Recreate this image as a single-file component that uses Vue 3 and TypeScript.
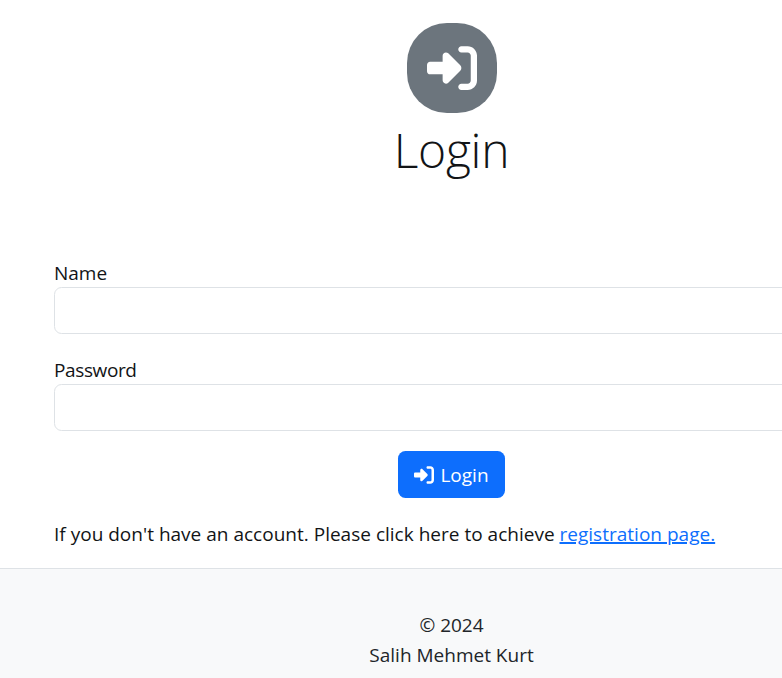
<script setup lang="ts">
import { ref } from 'vue'

const name = ref('')
const password = ref('')
const arrowPath =
  'M217.9 105.9L340.7 228.7c7.2 7.2 11.3 17.1 11.3 27.3s-4.1 20.1-11.3 27.3L217.9 406.1c-6.4 6.4-15 9.9-24 9.9c-18.7 0-33.9-15.2-33.9-33.9l0-62.1L32 320c-17.7 0-32-14.3-32-32l0-64c0-17.7 14.3-32 32-32l128 0 0-62.1c0-18.7 15.2-33.9 33.9-33.9c9 0 17.6 3.6 24 9.9zM352 416l64 0c17.7 0 32-14.3 32-32l0-256c0-17.7-14.3-32-32-32l-64 0c-17.7 0-32-14.3-32-32s14.3-32 32-32l64 0c53 0 96 43 96 96l0 256c0 53-43 96-96 96l-64 0c-17.7 0-32-14.3-32-32s14.3-32 32-32z'
</script>

<template>
  <div class="viewport">
    <div class="page">
      <main class="content">
        <header class="hero">
          <span class="badge">
            <svg class="badge-icon" viewBox="0 0 512 512" aria-hidden="true"><path :d="arrowPath" /></svg>
          </span>
          <h1 class="title">Login</h1>
        </header>
        <form class="form" @submit.prevent>
          <div class="field">
            <label for="name">Name</label>
            <input id="name" v-model="name" type="text" />
          </div>
          <div class="field">
            <label for="password" class="tight">Password</label>
            <input id="password" v-model="password" type="password" />
          </div>
          <button class="submit" type="submit">
            <svg class="submit-icon" viewBox="0 0 512 512" aria-hidden="true"><path :d="arrowPath" /></svg>
            <span>Login</span>
          </button>
        </form>
        <p class="hint">
          If you don't have an account. Please click here to achieve <a href="#">registration page.</a>
        </p>
      </main>
      <footer class="footer">
        <p>© 2024</p>
        <p>Salih Mehmet Kurt</p>
      </footer>
    </div>
  </div>
</template>

<style>
html,
body {
  overflow: hidden;
  background: #fff;
}
</style>

<style scoped>
.viewport {
  width: 100%;
  height: 678px;
  overflow: hidden;
}
.page {
  width: 903px;
  height: 678px;
  display: flex;
  flex-direction: column;
  font-family: 'Open Sans', 'Noto Sans', sans-serif;
  font-size: 19px;
  line-height: 30px;
  color: #212529;
}
.content {
  flex: none;
  height: 568px;
  box-sizing: border-box;
  padding: 23px 54px 0;
}
.hero {
  display: flex;
  flex-direction: column;
  align-items: center;
  height: 235px;
}
.badge {
  display: flex;
  padding: 20px;
  border-radius: 40px;
  background: #6c757d;
}
.badge-icon {
  width: 50px;
  height: 50px;
  fill: #fff;
}
.title {
  margin: 8px 0 0;
  font-size: 48px;
  line-height: 58px;
  font-weight: 300;
  letter-spacing: -0.3px;
  color: #121416;
}
.form {
  display: flex;
  flex-direction: column;
}
.field {
  display: flex;
  flex-direction: column;
  margin-bottom: 20px;
}
.field + .field {
  margin-top: 1px;
}
.field label {
  height: 29px;
}
.field .tight {
  letter-spacing: -0.38px;
}
.field input {
  height: 47px;
  box-sizing: border-box;
  border: 1px solid #dee2e6;
  border-radius: 7.5px;
  padding: 8px 15px;
  font: inherit;
  background: #fff;
  outline: none;
}
.submit {
  align-self: center;
  display: flex;
  align-items: center;
  justify-content: center;
  gap: 6px;
  width: 107px;
  height: 47px;
  padding: 0;
  border: 0;
  border-radius: 7.5px;
  background: #0d6efd;
  color: #fff;
  font: inherit;
}
.submit-icon {
  width: 20px;
  height: 20px;
  fill: #fff;
}
.submit span {
  padding-top: 1px;
}
.hint {
  margin: 21px 0 0;
  white-space: nowrap;
  letter-spacing: 0.01px;
  color: #121416;
}
.field label {
  color: #121416;
}
.hint a {
  color: #0d6efd;
  text-decoration: underline;
  text-decoration-thickness: 2px;
}
.footer {
  flex: 1;
  border-top: 1px solid #dee2e6;
  background: #f8f9fa;
  padding-top: 41px;
  text-align: center;
}
.footer p {
  margin: 0;
}
</style>
